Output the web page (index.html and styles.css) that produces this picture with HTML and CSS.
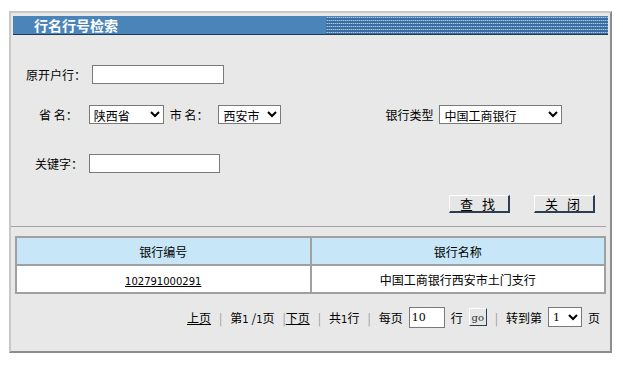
FILE: index.html
```html
<!DOCTYPE html>
<html lang="zh-CN">
<head>
    <meta charset="UTF-8">
    <title>行名行号检索</title>
    <link rel="stylesheet" href="styles.css">
</head>
<body>
    <div class="panel">
        <div class="title-bar">
            <span class="title-text">行名行号检索</span>
            <span class="title-dots"></span>
        </div>

        <div class="form">
            <div class="row row-1">
                <label class="lbl lbl-open">原开户行：</label>
                <input type="text" class="txt txt-open">
            </div>
            <div class="row row-2">
                <label class="lbl lbl-prov">省&nbsp;名：</label>
                <select class="sel sel-prov"><option>陕西省</option></select>
                <label class="lbl lbl-city">市&nbsp;名：</label>
                <select class="sel sel-city"><option>西安市</option></select>
                <label class="lbl lbl-type">银行类型</label>
                <select class="sel sel-type"><option>中国工商银行</option></select>
            </div>
            <div class="row row-3">
                <label class="lbl lbl-key">关键字：</label>
                <input type="text" class="txt txt-key">
            </div>
            <div class="row row-btns">
                <button class="btn">查 找</button>
                <button class="btn">关 闭</button>
            </div>
        </div>

        <div class="divider"></div>

        <table class="result">
            <thead>
                <tr>
                    <th>银行编号</th>
                    <th>银行名称</th>
                </tr>
            </thead>
            <tbody>
                <tr>
                    <td><a href="#" class="num">102791000291</a></td>
                    <td>中国工商银行西安市土门支行</td>
                </tr>
            </tbody>
        </table>

        <div class="pager">
            <a href="#">上页</a>
            <span class="sep">|</span>
            <span>第<span class="num">1</span>&nbsp;/<span class="num">1</span>页</span>
            <span class="sep sep-tight">|</span><a href="#">下页</a>
            <span class="sep">|</span>
            <span>共<span class="num">1</span>行</span>
            <span class="sep">|</span>
            <span>每页</span>
            <input type="text" class="txt txt-size" value="10">
            <span>行</span>
            <button class="go">go</button>
            <span class="sep">|</span>
            <span>转到第</span>
            <select class="sel sel-page"><option>1</option></select>
            <span>页</span>
        </div>
    </div>
</body>
</html>
```

FILE: styles.css
```css
body {
    margin: 0;
    padding: 0;
    background-color: #fff;
    font-family: "Noto Sans CJK SC", "DejaVu Sans", sans-serif;
    font-size: 12px;
    color: #000;
}

.panel {
    margin: 11px 0 0 9px;
    width: 599px;
    height: 338px;
    background-color: #e8e8e8;
    border: 2px solid;
    border-color: #c8c8c8 #8c8c8c #8c8c8c #c8c8c8;
}

.title-bar {
    margin: 3px 2px 0 2px;
    height: 18px;
    background-color: #4a84b8;
    border-bottom: 1px solid #1d3a57;
    display: flex;
    align-items: center;
}

.title-text {
    margin-left: 21px;
    color: #fff;
    font-size: 14px;
    font-weight: bold;
    line-height: 18px;
}

.title-dots {
    margin-left: auto;
    width: 282px;
    height: 17px;
    margin-top: 1px;
    background-image:
        repeating-linear-gradient(90deg, rgba(58, 108, 160, 0.55) 0 1px, transparent 1px 2px),
        repeating-linear-gradient(180deg, #a9c4df 0 1px, #3b6ea4 1px 3px);
}

.form {
    padding-top: 30px;
}

.row {
    display: flex;
    align-items: center;
    height: 19px;
}

.row-2 {
    margin-top: 21px;
}

.row-3 {
    margin-top: 30px;
}

.row-btns {
    margin-top: 22px;
    height: 18px;
    justify-content: flex-end;
    padding-right: 15px;
}

.lbl {
    white-space: nowrap;
}

.lbl-open { margin-left: 15px; }
.lbl-prov { margin-left: 28px; }
.lbl-city { margin-left: 6px; }
.lbl-type { margin-left: 104px; }
.lbl-key { margin-left: 24px; }

.txt {
    box-sizing: border-box;
    height: 19px;
    padding: 0 3px;
    border: 1px solid #7a7a7a;
    background-color: #fff;
    font-family: inherit;
    font-size: 12px;
}

.txt-open { margin-left: 6px; width: 132px; }
.txt-key { margin-left: 6px; width: 131px; }

.sel {
    box-sizing: border-box;
    height: 19px;
    border: 1px solid #7a7a7a;
    background-color: #fff;
    font-family: inherit;
    font-size: 12px;
    padding: 0;
    border-radius: 0;
}

.sel-prov { margin-left: 11px; width: 75px; }
.sel-city { margin-left: 10px; width: 63px; }
.sel-type { margin-left: 6px; width: 123px; }

.btn {
    box-sizing: border-box;
    width: 61px;
    height: 18px;
    margin-left: 24px;
    padding: 0;
    background-color: #e6e6e6;
    border: 1px solid;
    border-width: 1px 2px 2px 1px;
    border-color: #fff #2c3e50 #2c3e50 #fff;
    font-family: inherit;
    font-size: 13px;
    line-height: 14px;
    letter-spacing: 3px;
}

.divider {
    margin: 13px 4px 0 0;
    height: 1px;
    background-color: #a4a4a4;
}

.result {
    margin: 9px 0 0 4px;
    width: 591px;
    border-collapse: collapse;
    border: 2px solid #a0a0a0;
    background-color: #fff;
}

.result th,
.result td {
    width: 50%;
    height: 26px;
    padding: 0;
    border: 2px solid #a0a0a0;
    text-align: center;
    font-weight: normal;
}

.result th {
    background-color: #c7e6f7;
}

.result a {
    color: #000;
}

.num {
    font-family: "DejaVu Sans", sans-serif;
    font-size: 10px;
}

.pager {
    margin-top: 12px;
    padding-right: 10px;
    display: flex;
    justify-content: flex-end;
    align-items: center;
    height: 22px;
    white-space: nowrap;
}

.pager a {
    color: #000;
}

.sep {
    color: #999;
    margin: 0 8px;
}

.sep-tight {
    margin-right: 0;
}

.txt-size {
    width: 36px;
    height: 21px;
    margin: 0 6px;
    padding: 0 2px;
    font-family: "DejaVu Serif", serif;
    font-size: 11px;
}

.go {
    margin-left: 6px;
    width: 18px;
    height: 18px;
    padding: 0;
    background-color: #e6e6e6;
    border: 1px solid;
    border-color: #fff #2c3e50 #2c3e50 #fff;
    font-family: "DejaVu Serif", serif;
    font-size: 10px;
    color: #333;
}

.sel-page {
    margin: 0 6px;
    width: 34px;
    height: 20px;
    font-family: "DejaVu Serif", serif;
    font-size: 11px;
}
```
